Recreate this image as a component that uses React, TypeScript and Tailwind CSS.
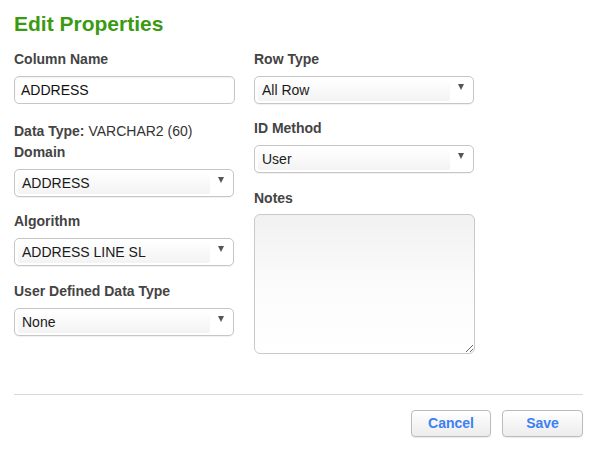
import React from 'react';

const font = { fontFamily: '"Liberation Sans", Arial, Helvetica, sans-serif' };

const Label: React.FC<{ children: React.ReactNode }> = ({ children }) => (
  <div className="h-5 text-[14px] leading-5 font-bold text-[#444]">{children}</div>
);

const Select: React.FC<{ value: string }> = ({ value }) => (
  <div className="mt-[7px] h-[28px] w-[220px] rounded-[5px] border border-[#c6c6c6] bg-white flex items-center pl-[3px] pr-[9px] shadow-[0_1px_1px_rgba(0,0,0,0.06)]">
    <div className="flex-1 h-[22px] rounded-[2px] bg-gradient-to-b from-white to-[#f3f3f3] flex items-center pl-[4px] text-[14px] text-[#1a1a1a]">
      {value}
    </div>
    <div className="ml-[8px] w-0 h-0 border-l-[3.5px] border-r-[3.5px] border-t-[6px] border-l-transparent border-r-transparent border-t-[#555] -mt-[6px]" />
  </div>
);

const App: React.FC = () => {
  return (
    <div className="w-[589px] h-[449px] bg-white" style={font}>
      <div className="pt-[11px] pl-[14px] w-[583px]">
        <h1 className="h-[26px] text-[21px] leading-[26px] font-bold text-[#3b9a12]">Edit Properties</h1>

        <div className="mt-[12px] flex gap-[19px]">
          <div className="w-[221px]">
            <Label>Column Name</Label>
            <div className="mt-[7px] h-[28px] w-[221px] rounded-[5px] border border-[#c6c6c6] bg-white shadow-[inset_0_1px_2px_rgba(0,0,0,0.06)] flex items-center px-[6px] text-[14px] text-[#111]">
              ADDRESS
            </div>

            <div className="mt-[17px] h-5 text-[14px] leading-5 text-[#333]">
              <span className="font-bold text-[#444]">Data Type:</span> VARCHAR2 (60)
            </div>
            <div className="mt-[1px]">
              <Label>Domain</Label>
            </div>
            <div className="mt-[2px]">
              <Select value="ADDRESS" />
            </div>

            <div className="mt-[14px]">
              <Label>Algorithm</Label>
              <Select value="ADDRESS LINE SL" />
            </div>

            <div className="mt-[15px]">
              <Label>User Defined Data Type</Label>
              <Select value="None" />
            </div>
          </div>

          <div className="w-[221px]">
            <Label>Row Type</Label>
            <Select value="All Row" />

            <div className="mt-[14px]">
              <Label>ID Method</Label>
              <Select value="User" />
            </div>

            <div className="mt-[15px]">
              <Label>Notes</Label>
              <textarea
                readOnly
                className="mt-[6px] block h-[140px] w-[221px] rounded-[6px] border border-[#c9c9c9] bg-gradient-to-b from-[#f1f1f1] via-[#fbfbfb] to-white outline-none resize"
              />
            </div>
          </div>
        </div>

        <div className="mt-[40px] h-px bg-[#d9d9d9]" />

        <div className="mt-[15px] flex justify-end gap-[11px]">
          <button className="h-[27px] w-[80px] rounded-[4px] border border-[#bcbcbc] bg-gradient-to-b from-white to-[#ececec] text-[14px] font-bold text-[#3b80f4] shadow-[0_1px_1px_rgba(0,0,0,0.08)]">
            Cancel
          </button>
          <button className="h-[27px] w-[81px] rounded-[4px] border border-[#bcbcbc] bg-gradient-to-b from-white to-[#ececec] text-[14px] font-bold text-[#3b80f4] shadow-[0_1px_1px_rgba(0,0,0,0.08)]">
            Save
          </button>
        </div>
      </div>
    </div>
  );
};

export default App;
